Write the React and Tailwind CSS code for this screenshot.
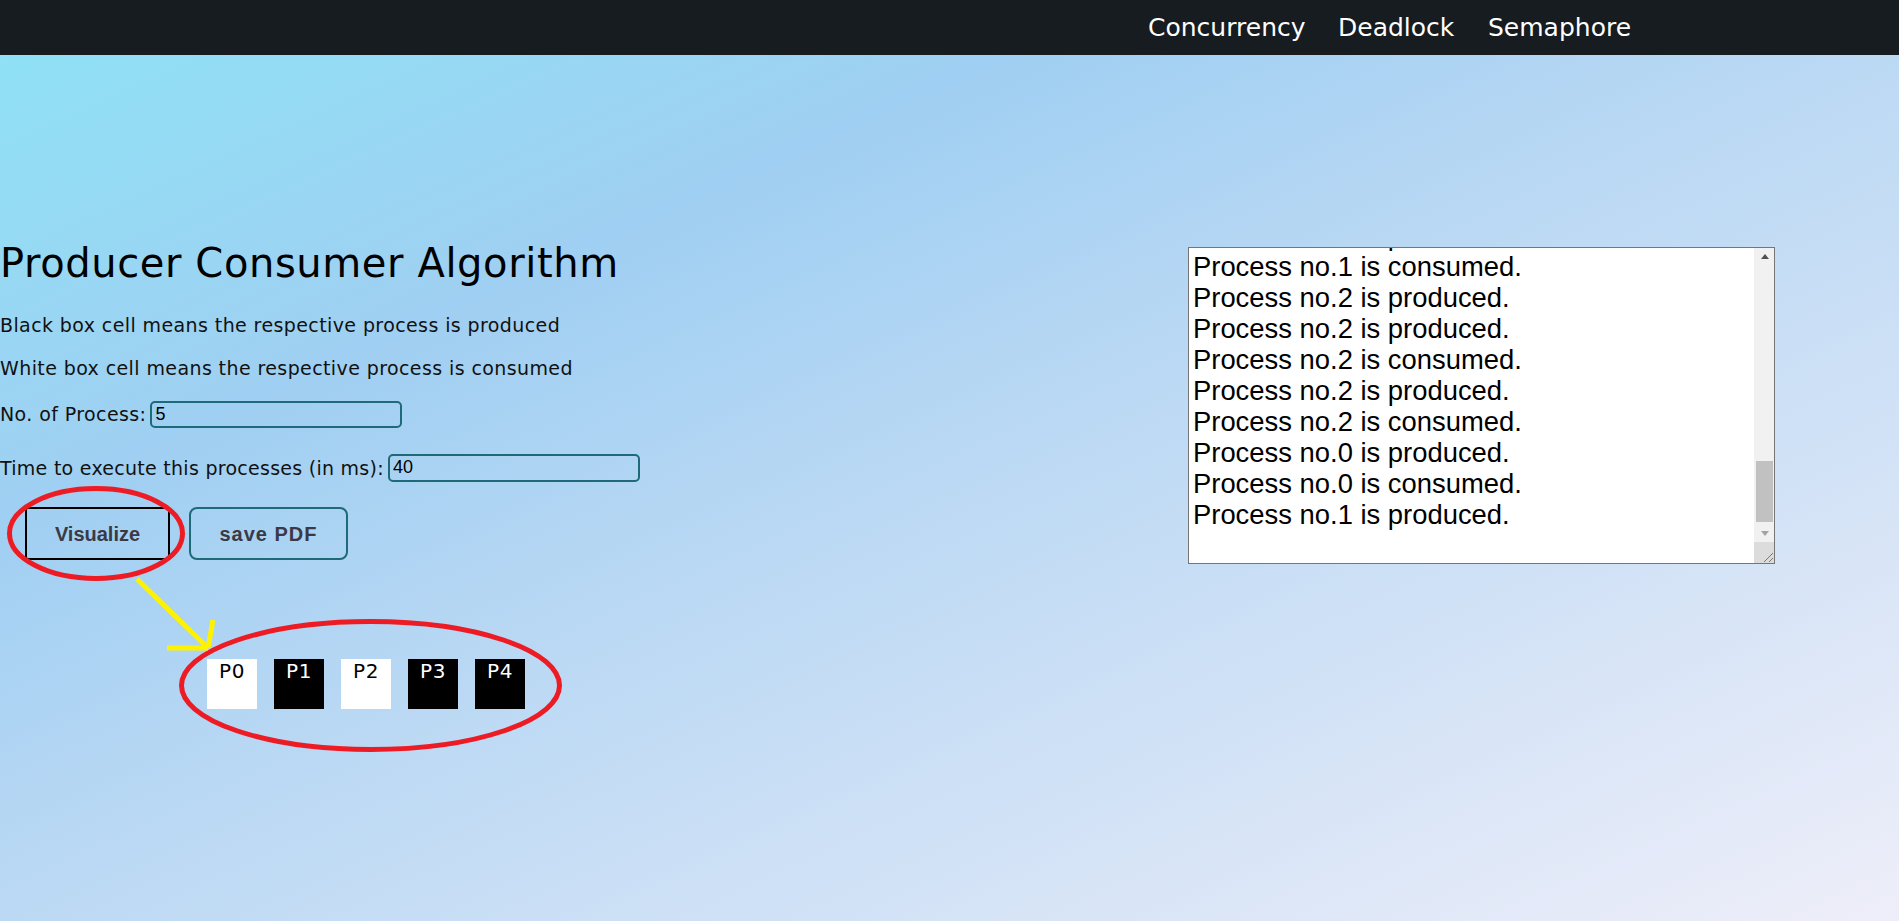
import React from "react";

const shown = [
  "Process no.1 is produced.",
  "Process no.1 is consumed.",
  "Process no.2 is produced.",
  "Process no.2 is produced.",
  "Process no.2 is consumed.",
  "Process no.2 is produced.",
  "Process no.2 is consumed.",
  "Process no.0 is produced.",
  "Process no.0 is consumed.",
  "Process no.1 is produced.",
];

const boxes = [
  { label: "P0", dark: false },
  { label: "P1", dark: true },
  { label: "P2", dark: false },
  { label: "P3", dark: true },
  { label: "P4", dark: true },
];

function LogBox() {
  return (
    <div
      className="w-[587px] h-[317px] border border-[#767676] bg-white flex"
      style={{ fontFamily: '"Liberation Sans", Arial, sans-serif' }}
    >
      <div className="flex-1 overflow-hidden">
        <div className="mt-[-28px] pl-[4px] text-[27.4px] leading-[31px] text-black">
          {shown.map((l, i) => (
            <div key={i} className="whitespace-pre">
              {l}
            </div>
          ))}
        </div>
      </div>
      <div className="w-[20px] flex flex-col bg-[#f1f1f1]">
        <div className="h-[17px] flex items-center justify-center pl-[1px]">
          <div className="w-0 h-0 border-l-[4px] border-r-[4px] border-b-[5px] border-l-transparent border-r-transparent border-b-[#505050]" />
        </div>
        <div className="flex-1 pl-[2px] pr-[1px]">
          <div className="mt-[196px] h-[61px] bg-[#c1c1c1]" />
        </div>
        <div className="h-[17px] flex items-center justify-center pl-[1px]">
          <div className="w-0 h-0 border-l-[4px] border-r-[4px] border-t-[5px] border-l-transparent border-r-transparent border-t-[#a3a3a3]" />
        </div>
        <div className="h-[21px] bg-[#dcdcdc] flex items-end justify-end">
          <svg width="12" height="12" viewBox="0 0 12 12">
            <line x1="11" y1="2" x2="2" y2="11" stroke="#777" strokeWidth="1" />
            <line x1="11" y1="7" x2="7" y2="11" stroke="#777" strokeWidth="1" />
          </svg>
        </div>
      </div>
    </div>
  );
}

export default function App() {
  return (
    <div
      className="relative w-[1899px] h-[921px] overflow-hidden"
      style={{ fontFamily: '"DejaVu Sans", sans-serif' }}
    >
      <nav className="h-[55px] bg-[#161c20] flex items-center justify-end pr-[265px] text-white text-[25px]">
        <a className="block w-[190px]">Concurrency</a>
        <a className="block w-[150px]">Deadlock</a>
        <a className="block w-[146px]">Semaphore</a>
      </nav>

      <main className="h-[866px] flex pt-[187px] bg-[linear-gradient(to_bottom_right,#8fe1f5_0%,#a0cff2_27%,#bcd9f4_50%,#eeeef9_100%)]">
        <section className="w-[1188px] shrink-0 text-[#111]">
          <h1 className="text-[40px] leading-[43px] font-normal text-black mb-[27px] tracking-[0.6px]">
            Producer Consumer Algorithm
          </h1>
          <p className="text-[19px] leading-[27px] tracking-[0.4px] mb-[16px]">
            Black box cell means the respective process is produced
          </p>
          <p className="text-[19px] leading-[27px] tracking-[0.4px] mb-[18px]">
            White box cell means the respective process is consumed
          </p>

          <div className="flex items-center gap-[4px] text-[19px] tracking-[0.4px] mb-[25px]">
            <span>No. of Process:</span>
            <input
              readOnly
              value="5"
              className="w-[252px] h-[27px] border-2 border-[#1f6a78] rounded-[5px] bg-transparent px-[3px] text-[18px] tracking-normal text-black outline-none"
              style={{ fontFamily: '"Liberation Sans", Arial, sans-serif' }}
            />
          </div>

          <div className="flex items-center gap-[4px] text-[19px] tracking-[0.27px] mb-[25px]">
            <span>Time to execute this processes (in ms):</span>
            <input
              readOnly
              value="40"
              className="w-[252px] h-[28px] border-2 border-[#1f6a78] rounded-[5px] bg-transparent px-[3px] text-[18px] tracking-normal text-black outline-none"
              style={{ fontFamily: '"Liberation Sans", Arial, sans-serif' }}
            />
          </div>

          <div
            className="flex gap-[19px] pl-[25px]"
            style={{ fontFamily: '"Liberation Sans", Arial, sans-serif' }}
          >
            <button className="w-[145px] h-[53px] border-2 border-black rounded-[3px] text-[20px] font-bold text-[#3a3a46]">
              Visualize
            </button>
            <button className="w-[159px] h-[53px] border-2 border-[#1f6a78] rounded-[8px] text-[20px] font-bold tracking-[1px] text-[#3a3a46]">
              save PDF
            </button>
          </div>

          <div className="flex gap-[17px] pl-[207px] mt-[99px]">
            {boxes.map((b) => (
              <div
                key={b.label}
                className={
                  b.dark
                    ? "w-[50px] h-[50px] bg-black text-white text-[20px] leading-[24px] tracking-[0.5px] text-center"
                    : "w-[50px] h-[50px] bg-white text-black text-[20px] leading-[24px] tracking-[0.5px] text-center"
                }
              >
                {b.label}
              </div>
            ))}
          </div>
        </section>

        <section className="pt-[5px]">
          <LogBox />
        </section>
      </main>

      <svg
        className="absolute left-0 top-0 pointer-events-none"
        width="1899"
        height="921"
        viewBox="0 0 1899 921"
      >
        <ellipse cx="96" cy="533.5" rx="86.5" ry="45" fill="none" stroke="#ed1c24" strokeWidth="5" />
        <ellipse cx="370.5" cy="685.5" rx="189" ry="64" fill="none" stroke="#ed1c24" strokeWidth="5" />
        <line x1="137" y1="579" x2="208" y2="648" stroke="#fff200" strokeWidth="5" />
        <line x1="208" y1="648" x2="167" y2="648" stroke="#fff200" strokeWidth="5" />
        <line x1="208" y1="648" x2="213" y2="620" stroke="#fff200" strokeWidth="5" />
      </svg>
    </div>
  );
}
